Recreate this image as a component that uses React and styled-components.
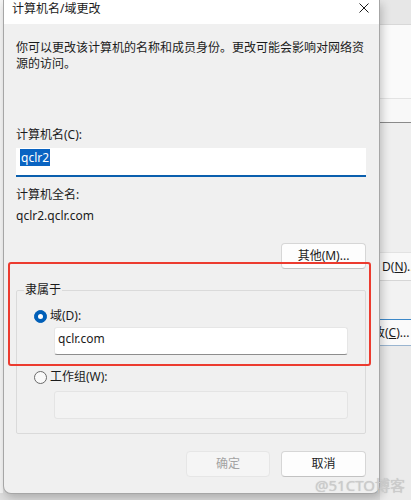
import React from "react";
import styled, { createGlobalStyle } from "styled-components";

/* windows "computer name / domain changes" dialog, with a red annotation box */

const Global = createGlobalStyle`
  html, body {
    margin: 0;
    padding: 0;
    background: #e6e6e6;
  }
  body {
    font-family: "Noto Sans", "Noto Sans CJK SC", sans-serif;
    font-size: 12px;
    color: #1b1b1b;
  }
`;

const Screen = styled.div`
  position: relative;
  display: flex;
  align-items: flex-start;
  width: 411px;
  height: 500px;
  overflow: hidden;
  background: #dedede;
`;

const Edge = styled.div`
  width: 3px;
  height: 493px;
  background: #f5f5f5;
`;

const Dialog = styled.div`
  position: relative;
  z-index: 1;
  width: 377px;
  box-sizing: border-box;
  background: #f0f0f0;
  border: 1px solid #a6a6a6;
  border-top: none;
  border-radius: 0 0 8px 8px;
  box-shadow: 2px 4px 10px rgba(0, 0, 0, 0.22);
`;

const TitleBar = styled.div`
  display: flex;
  justify-content: space-between;
  align-items: flex-start;
  height: 24px;
  box-sizing: border-box;
  padding: 1px 10px 0 8px;
  background: #ffffff;
`;

const Title = styled.span`
  line-height: 16px;
  font-size: 12px;
`;

const Close = styled.span`
  display: flex;
  margin-top: 2px;
`;

const Body = styled.div`
  display: flex;
  flex-direction: column;
  padding: 16px 13px 16px 12px;
`;

const Intro = styled.p`
  margin: 0;
  line-height: 16px;
`;

const FieldLabel = styled.div`
  margin-top: ${p => p.$top}px;
  line-height: 16px;
`;

const NameInput = styled.div`
  margin-top: 5px;
  height: 29px;
  box-sizing: border-box;
  padding: 2px 4px 0;
  background: #ffffff;
  border-bottom: 2px solid #0a5fae;
  line-height: 16px;
`;

const Selected = styled.span`
  padding: 0 1px;
  background: #0a64c2;
  color: #ffffff;
`;

const FullName = styled.div`
  margin-top: 5px;
  line-height: 16px;
`;

const ButtonRow = styled.div`
  display: flex;
  justify-content: flex-end;
  gap: 11px;
  margin-top: ${p => p.$top}px;
`;

const Button = styled.button`
  width: ${p => p.$w || 85}px;
  height: 26px;
  padding: 0;
  font-family: inherit;
  font-size: 12px;
  line-height: 16px;
  border-radius: 4px;
  border: 1px solid ${p => (p.disabled ? "#e6e6e6" : "#d6d6d6")};
  border-bottom-color: ${p => (p.disabled ? "#e6e6e6" : "#c2c2c2")};
  background: ${p => (p.disabled ? "#f5f5f5" : "#fdfdfd")};
  color: ${p => (p.disabled ? "#a3a3a3" : "#1b1b1b")};
`;

const Group = styled.fieldset`
  margin: 13px 0 0;
  padding: 0 0 14px;
  min-width: 0;
  border: 1px solid #dadada;
  border-radius: 2px;
`;

const Legend = styled.legend`
  margin-left: 7px;
  padding: 0 1px;
  line-height: 16px;
`;

const GroupInner = styled.div`
  display: flex;
  flex-direction: column;
  padding: 0 17px;
`;

const RadioRow = styled.label`
  display: flex;
  align-items: center;
  gap: 3px;
  margin-top: ${p => p.$top}px;
  line-height: 16px;
`;

const Radio = styled.span`
  display: flex;
  align-items: center;
  justify-content: center;
  width: 13px;
  height: 13px;
  box-sizing: border-box;
  border-radius: 50%;
  border: 1px solid ${p => (p.$on ? "#005fb8" : "#6a6a6a")};
  background: ${p => (p.$on ? "#005fb8" : "#f9f9f9")};

  &::after {
    content: "";
    display: ${p => (p.$on ? "block" : "none")};
    width: 5px;
    height: 5px;
    border-radius: 50%;
    background: #ffffff;
  }
`;

const TextBox = styled.div`
  margin: ${p => p.$top}px 0 0 20px;
  height: 28px;
  box-sizing: border-box;
  padding: 3px 3px 0;
  line-height: 16px;
  border-radius: 3px;
  border: 1px solid ${p => (p.disabled ? "#e4e4e4" : "#e6e6e6")};
  border-bottom-color: ${p => (p.disabled ? "#e4e4e4" : "#8d8d8d")};
  background: ${p => (p.disabled ? "#f3f3f3" : "#ffffff")};
`;

/* red box drawn over the screenshot */
const Highlight = styled.div`
  position: absolute;
  left: 4px;
  top: 262px;
  width: 363px;
  height: 104px;
  box-sizing: border-box;
  border: 2px solid #ec3b2f;
  border-radius: 3px;
  pointer-events: none;
`;

/* the window behind the dialog, only its right edge shows */
const Behind = styled.div`
  display: flex;
  flex-direction: column;
  width: 31px;
  height: 500px;
  background: #ebebeb;
`;

const Strip = styled.div`
  height: ${p => p.$h}px;
  box-sizing: border-box;
  background: ${p => p.$bg};
  border-bottom: 1px solid ${p => p.$line};
  line-height: ${p => p.$h - 1}px;
  font-size: 12px;
  white-space: nowrap;
  overflow: hidden;
  text-indent: ${p => p.$indent || 0}px;
`;

const Key = styled.span`
  text-decoration: underline;
`;

const Watermark = styled.div`
  position: absolute;
  left: 315px;
  top: 476px;
  z-index: 2;
  font-size: 15px;
  line-height: 18px;
  color: #cbcbcb;
  text-shadow: 0 0 1px rgba(120, 120, 120, 0.35);
`;

const App = () => {
  return (
    <>
      <Global />
      <Screen>
        <Edge />
        <Dialog>
          <TitleBar>
            <Title>计算机名/域更改</Title>
            <Close>
              <svg width="10" height="10" viewBox="0 0 10 10">
                <path d="M0.5 0.5 L9.5 9.5 M9.5 0.5 L0.5 9.5" stroke="#1b1b1b" strokeWidth="1" fill="none" />
              </svg>
            </Close>
          </TitleBar>
          <Body>
            <Intro>
              你可以更改该计算机的名称和成员身份。更改可能会影响对网络资
              <br />
              源的访问。
            </Intro>
            <FieldLabel $top={55}>计算机名(C):</FieldLabel>
            <NameInput>
              <Selected>qclr2</Selected>
            </NameInput>
            <FieldLabel $top={10}>计算机全名:</FieldLabel>
            <FullName>qclr2.qclr.com</FullName>
            <ButtonRow $top={19}>
              <Button>其他(M)...</Button>
            </ButtonRow>
            <Group>
              <Legend>隶属于</Legend>
              <GroupInner>
                <RadioRow $top={10}>
                  <Radio $on />
                  域(D):
                </RadioRow>
                <TextBox $top={3}>qclr.com</TextBox>
                <RadioRow $top={14}>
                  <Radio />
                  工作组(W):
                </RadioRow>
                <TextBox $top={6} disabled />
              </GroupInner>
            </Group>
            <ButtonRow $top={17}>
              <Button $w={84} disabled>
                确定
              </Button>
              <Button>取消</Button>
            </ButtonRow>
          </Body>
          <Highlight />
        </Dialog>
        <Behind>
          <Strip $h={25} $bg="#e7e7e7" $line="#d8d8d8" />
          <Strip $h={74} $bg="#fafafa" $line="#e3e3e3" />
          <Strip $h={24} $bg="#f8f8f8" $line="#8a8a8a" />
          <Strip $h={130} $bg="#efefef" $line="#e2e2e2" />
          <Strip $h={28} $bg="#f9f9f9" $line="#d6d6d6" $indent={2}>
            D(<Key>N</Key>)...
          </Strip>
          <Strip $h={39} $bg="#f2f2f2" $line="#3d88c8" />
          <Strip $h={26} $bg="#fafafa" $line="#9ab5d0" $indent={-7}>
            改(<Key>C</Key>)...
          </Strip>
        </Behind>
        <Watermark>@51CTO博客</Watermark>
      </Screen>
    </>
  );
};

export default App;
